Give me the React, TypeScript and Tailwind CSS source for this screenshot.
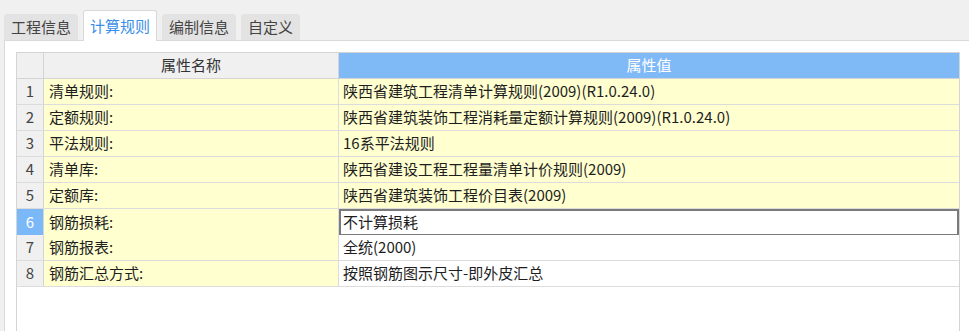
import React from "react";

const rows = [
  { name: "清单规则:", value: "陕西省建筑工程清单计算规则(2009)(R1.0.24.0)", hl: true },
  { name: "定额规则:", value: "陕西省建筑装饰工程消耗量定额计算规则(2009)(R1.0.24.0)", hl: true },
  { name: "平法规则:", value: "16系平法规则", hl: true },
  { name: "清单库:", value: "陕西省建设工程工程量清单计价规则(2009)", hl: true },
  { name: "定额库:", value: "陕西省建筑装饰工程价目表(2009)", hl: true },
  { name: "钢筋损耗:", value: "不计算损耗", hl: false },
  { name: "钢筋报表:", value: "全统(2000)", hl: false },
  { name: "钢筋汇总方式:", value: "按照钢筋图示尺寸-即外皮汇总", hl: false },
];

const tabs = ["工程信息", "计算规则", "编制信息", "自定义"];

export default function App() {
  const selected = 5;
  return (
    <div
      className="w-[969px] h-[331px] bg-[#f0f0f0] flex flex-col overflow-hidden text-[15px] text-[#1e1e1e]"
      style={{ fontFamily: '"Noto Sans CJK SC", "Noto Sans", sans-serif' }}
    >
      <div className="flex items-end h-[40px] pl-[4px] gap-[5px]">
        {tabs.map((t, i) =>
          i === 1 ? (
            <div
              key={t}
              className="h-[31px] -mb-px px-[6px] flex items-center bg-white border border-b-0 border-[#d9d9d9] rounded-t-[3px] text-[#3b8ee8] relative z-10"
            >
              {t}
            </div>
          ) : (
            <div
              key={t}
              className="h-[26px] px-[7px] flex items-center bg-[#e3e3e3] rounded-t-[3px] text-[#444]"
            >
              {t}
            </div>
          )
        )}
      </div>
      <div className="flex-1 ml-[4px] bg-white border-l border-t border-[#d9d9d9] pt-[11px] pl-[11px] pr-[9px] flex flex-col">
        <div className="flex-1 border-l border-r border-t border-[#d4d4d4] flex flex-col">
          <div className="grid grid-cols-[27px_295px_1fr] h-[26px] border-b border-[#d4d4d4]">
            <div className="bg-[#f0f0f0] border-r border-[#d4d4d4]" />
            <div className="bg-[#f0f0f0] border-r border-[#d4d4d4] flex items-center justify-center text-[#333]">
              属性名称
            </div>
            <div className="bg-[#7fbaf7] flex items-center justify-center text-white">属性值</div>
          </div>
          {rows.map((r, i) => (
            <div key={i} className="grid grid-cols-[27px_295px_1fr] h-[26px] border-b border-[#dcdcdc]">
              <div
                className={
                  i === selected
                    ? "bg-[#7ab8f7] text-white border-r border-[#d4d4d4] flex items-center justify-center"
                    : "bg-[#f0f0f0] text-[#444] border-r border-[#d4d4d4] flex items-center justify-center"
                }
              >
                {i + 1}
              </div>
              <div className="bg-[#ffffd0] border-r border-[#dcdcdc] flex items-center pl-[5px] whitespace-nowrap">
                {r.name}
              </div>
              {i === selected ? (
                <div className="bg-white border-2 border-[#7a7a7a] flex items-center pl-[2px] whitespace-nowrap">
                  {r.value}
                </div>
              ) : (
                <div
                  className={
                    r.hl
                      ? "bg-[#ffffd0] flex items-center pl-[4px] whitespace-nowrap"
                      : "bg-white flex items-center pl-[4px] whitespace-nowrap"
                  }
                >
                  {r.value}
                </div>
              )}
            </div>
          ))}
        </div>
      </div>
    </div>
  );
}
